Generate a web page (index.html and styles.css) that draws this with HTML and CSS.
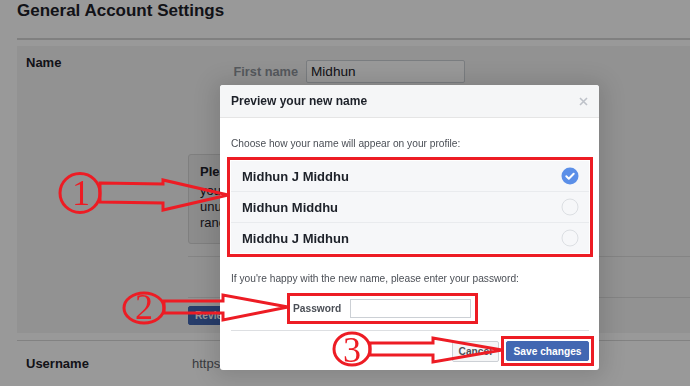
FILE: index.html
```html
<!DOCTYPE html>
<html>
<head>
    <title>General Account Settings</title>
    <meta name="viewport" content="width=device-width, initial-scale=1.0">
    <link rel="stylesheet" href="styles.css">
</head>
<body>
    <div class="page">
        <div class="page-head">
            <h1>General Account Settings</h1>
        </div>

        <div class="setting name-setting">
            <div class="setting-label">Name</div>
            <div class="setting-body">
                <div class="name-fields">
                    <label class="field"><span class="field-label">First name</span><input class="field-input" type="text" value="Midhun"></label>
                </div>

                <div class="note">
                    <div class="note-title">Please note</div>
                    <p class="note-text">you<br>unu<br>ranc</p>
                </div>

                <div class="name-extra"></div>

                <div class="name-actions">
                    <button class="btn btn-review">Review</button>
                </div>
            </div>
        </div>

        <div class="setting username-setting">
            <div class="setting-label">Username</div>
            <div class="setting-value">https:</div>
        </div>
    </div>

    <div class="overlay"></div>

    <div class="dialog">
        <div class="dialog-head">
            <span>Preview your new name</span>
            <svg class="close" width="9" height="9" viewBox="0 0 9 9"><path d="M1 1l7 7M8 1L1 8" stroke="#bec2c9" stroke-width="1.6" fill="none"/></svg>
        </div>

        <div class="dialog-body">
            <p class="hint">Choose how your name will appear on your profile:</p>

            <div class="choices mark">
                <div class="choice-list">
                    <div class="choice">
                        <span>Midhun J Middhu</span>
                        <svg class="radio" width="18" height="18" viewBox="0 0 18 18"><circle cx="9" cy="9" r="8.5" fill="#5b8fe8"/><path d="M5.3 9.3l2.5 2.4 4.9-5" stroke="#fff" stroke-width="2" fill="none" stroke-linecap="round" stroke-linejoin="round"/></svg>
                    </div>
                    <div class="choice">
                        <span>Midhun Middhu</span>
                        <svg class="radio" width="18" height="18" viewBox="0 0 18 18"><circle cx="9" cy="9" r="8" fill="none" stroke="#dcdfe3" stroke-width="1"/></svg>
                    </div>
                    <div class="choice">
                        <span>Middhu J Midhun</span>
                        <svg class="radio" width="18" height="18" viewBox="0 0 18 18"><circle cx="9" cy="9" r="8" fill="none" stroke="#dcdfe3" stroke-width="1"/></svg>
                    </div>
                </div>
            </div>

            <p class="hint hint-password">If you're happy with the new name, please enter your password:</p>

            <div class="password-row mark">
                <span class="password-label">Password</span>
                <input class="password-input" type="password">
            </div>

            <div class="dialog-foot">
                <button class="btn btn-cancel">Cancel</button>
                <div class="save-wrap mark">
                    <button class="btn btn-save">Save changes</button>
                </div>
            </div>
        </div>
    </div>

    <!-- hand drawn annotations -->
    <svg class="marks" width="690" height="386" viewBox="0 0 690 386">
        <g fill="none" stroke="#ed1c24" stroke-width="3" stroke-linejoin="miter">
            <ellipse cx="80" cy="193" rx="20" ry="19.5"/>
            <polygon points="100,183 163,184 163,180 228,195 163,210 163,203 100,202"/>
            <ellipse cx="144" cy="308" rx="20" ry="15"/>
            <polygon points="164,301 223,301 223,295 288,307 223,320 223,313 164,313"/>
            <ellipse cx="352" cy="349" rx="18" ry="16"/>
            <polygon points="370,343 433,343 433,338 502,350 433,362 433,355 370,355"/>
        </g>
        <g fill="#ed1c24" font-family="'Liberation Serif', serif" font-size="36" text-anchor="middle">
            <text x="81" y="205">1</text>
            <text x="144" y="319">2</text>
            <text x="352" y="362">3</text>
        </g>
    </svg>
</body>
</html>
```

FILE: styles.css
```css
* {
    margin: 0;
    padding: 0;
    box-sizing: border-box;
}

body {
    background: #fff;
    color: #1d2129;
    font-family: "Liberation Sans", Arial, sans-serif;
    width: 690px;
    height: 386px;
    overflow: hidden;
}

.page {
    padding-left: 17px;
}

.page-head {
    padding: 1px 0 17px;
    border-bottom: 2px solid #d6d6d6;
}

h1 {
    font-size: 17px;
    line-height: 20px;
    font-weight: bold;
    color: #1d2129;
}

.setting {
    display: grid;
    grid-template-columns: 162px 1fr;
    padding-left: 9px;
}

.setting-label {
    font-size: 13px;
    line-height: 16px;
    font-weight: bold;
}

.name-setting {
    margin-top: 6px;
    padding-top: 9px;
    padding-bottom: 8px;
    background: #f4f4f4;
}

.setting-body {
    padding-top: 5px;
}

/* the other name rows sit under the dialog */
.name-fields {
    min-height: 85px;
}

.field {
    display: flex;
    align-items: center;
    gap: 8px;
}

.field-label {
    width: 110px;
    text-align: right;
    font-size: 12.75px;
    font-weight: bold;
    color: #90949c;
}

.field-input {
    width: 159px;
    height: 23px;
    border: 1px solid #ccd0d5;
    border-radius: 2px;
    padding: 0 4px;
    font-family: inherit;
    font-size: 13.6px;
    color: #1d2129;
    background: #fff;
}

.note {
    margin-top: 9px;
    width: 372px;
    height: 90px;
    padding: 9px 11px 0;
    background: #e9e9e9;
    border: 1px solid #d4d4d4;
    border-radius: 3px;
    font-size: 13px;
    line-height: 16px;
}

.note-title {
    font-weight: bold;
}

.note-text {
    margin-top: 3px;
}

.name-extra {
    margin-top: 12px;
    height: 42px;
    border-top: 1px solid #dddddd;
    border-bottom: 1px solid #dddddd;
}

.name-actions {
    margin-top: 8px;
    display: flex;
}

.btn {
    height: 19px;
    padding: 0 6px;
    border: 1px solid #ccd0d5;
    border-radius: 2px;
    background: #f5f6f7;
    color: #4b4f56;
    font-family: inherit;
    font-size: 10.2px;
    font-weight: bold;
}

.btn-review {
    width: 80px;
    text-align: left;
    background: #4267b2;
    border-color: #4267b2;
    color: #fff;
}

.username-setting {
    grid-template-columns: 166px 1fr;
    margin-top: 7px;
    padding-top: 15px;
    border-top: 1px solid #d9d9d9;
}

.setting-value {
    font-size: 13px;
    line-height: 16px;
    color: #5f646b;
}

.overlay {
    position: fixed;
    inset: 0;
    background: rgba(0, 0, 0, 0.4);
}

.dialog {
    position: absolute;
    left: 220px;
    top: 85px;
    width: 379px;
    background: #fff;
    border-radius: 3px;
    box-shadow: 0 2px 22px 6px rgba(0, 0, 0, 0.13);
}

.dialog-head {
    height: 33px;
    padding: 0 11px;
    display: flex;
    align-items: center;
    justify-content: space-between;
    background: #f5f6f7;
    border-bottom: 1px solid #e5e5e5;
    border-radius: 3px 3px 0 0;
    font-size: 12px;
    font-weight: bold;
    color: #1d2129;
}

.close {
    margin-top: 1px;
}

.dialog-body {
    padding: 0 10px 4px 11px;
}

.hint {
    margin-top: 19px;
    font-size: 10.2px;
    line-height: 14px;
    color: #4b4f56;
}

.mark {
    border: 3px solid #ed1c24;
}

.choices {
    margin: 6px -4px 0;
    padding: 1px;
}

.choice-list {
    background: #f6f7f9;
}

.choice {
    height: 31px;
    padding: 0 11px;
    display: flex;
    align-items: center;
    justify-content: space-between;
    border-top: 1px solid #e9ebee;
    font-size: 13px;
    font-weight: bold;
    color: #1d2129;
}

.choice:first-child {
    height: 30px;
    border-top: 0;
}

.radio {
    margin-right: -1px;
}

.hint-password {
    margin-top: 15px;
}

.password-row {
    margin: 7px 0 0 56px;
    width: 191px;
    height: 31px;
    padding: 0 4px 0 3px;
    display: flex;
    align-items: center;
    justify-content: space-between;
}

.password-label {
    font-size: 10.2px;
    font-weight: bold;
    color: #4b4f56;
}

.password-input {
    width: 121px;
    height: 19px;
    border: 1px solid #ccd0d5;
    background: #fff;
}

.dialog-foot {
    margin-top: 6px;
    padding-top: 5px;
    border-top: 1px solid #dddfe2;
    display: flex;
    align-items: center;
    justify-content: flex-end;
}

.btn-cancel {
    margin-right: 2px;
    height: 21px;
}

.save-wrap {
    margin-right: -5px;
    padding: 2px;
}

.btn-save {
    display: block;
    width: 83px;
    height: 20px;
    background: #4267b2;
    border-color: #4267b2;
    color: #fff;
}

.marks {
    position: absolute;
    left: 0;
    top: 0;
    pointer-events: none;
}
```
